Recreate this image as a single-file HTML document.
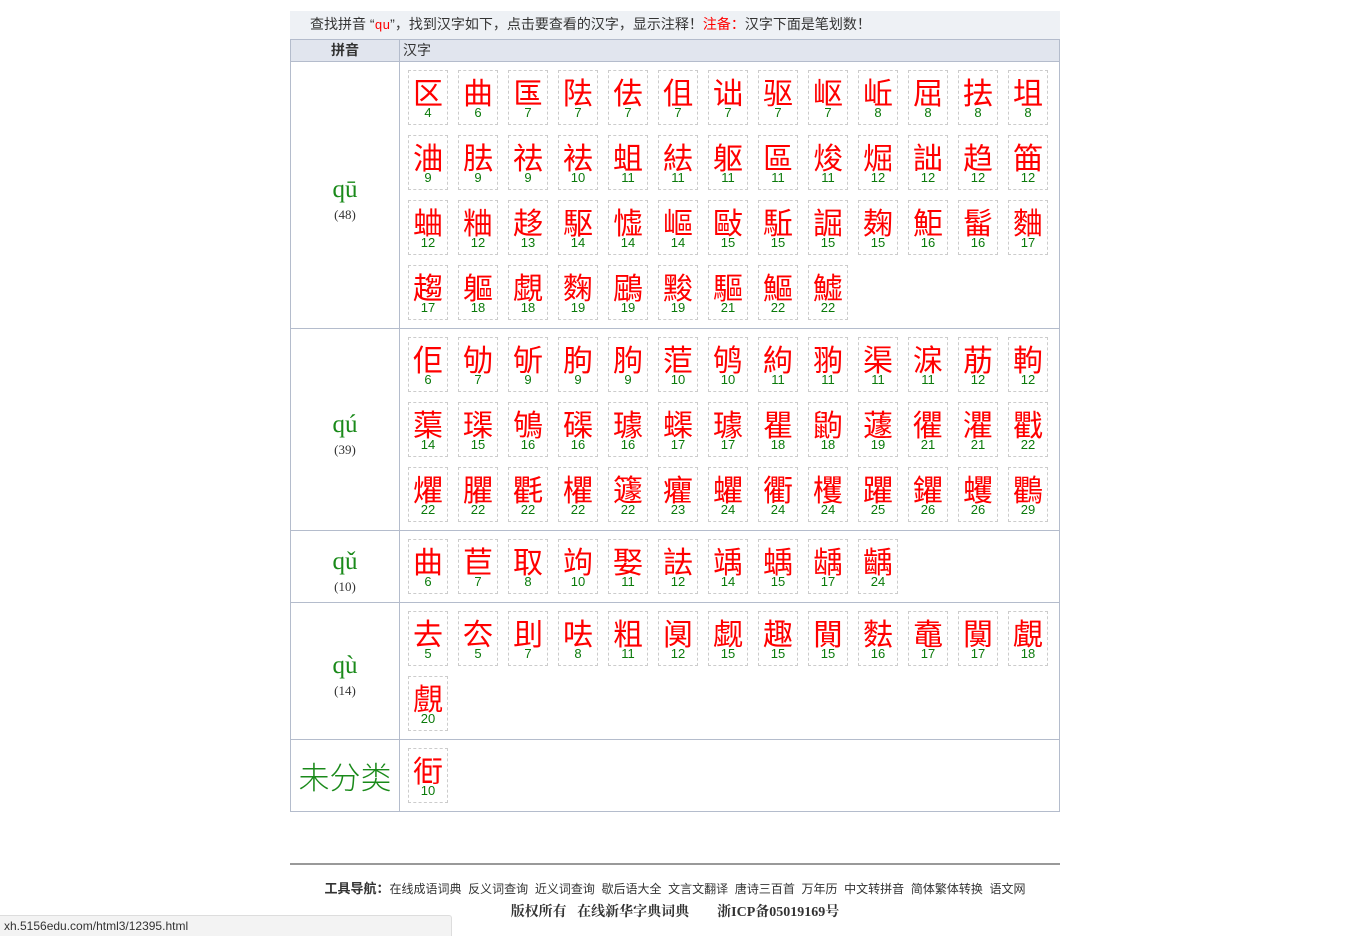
<!DOCTYPE html>
<html><head><meta charset="utf-8"><style>
body{margin:0;background:#fff;width:1348px;height:936px;position:relative;overflow:hidden;font-family:"Liberation Sans","Noto Sans CJK SC",sans-serif;}
#wrap{position:absolute;left:290px;top:11px;width:770px;}
.title{height:28px;background:#eef1f5;font-size:14px;line-height:26px;color:#333;padding-left:20px;}
.title .r{color:#f00}
.title .q{color:#f00;font-family:"Liberation Mono",monospace;font-size:13px}
table{border-collapse:collapse;width:770px;}
td,th{border:1px solid #b4bccc;padding:0;vertical-align:top;}
th{background:#e1e5ee;height:21px;font-size:14px;font-weight:bold;color:#333;text-align:center;line-height:20px}
th.h2{text-align:left;padding-left:3px;font-weight:normal}
td.py{width:108px;text-align:center;vertical-align:middle;color:#1a8a1a;font-family:"Liberation Serif","Noto Serif CJK SC",serif;font-size:25px;line-height:26px}
td.py .pw{position:relative;top:5px}
td.py span{display:block;font-size:13px;color:#333;line-height:16px;margin-top:4px;font-family:"Liberation Serif",serif}
.cells{padding:3px 0 3px 3px;display:flex;flex-wrap:wrap;}
.c{width:38px;height:53px;border:1px dashed #ccc;margin:5px 5px 5px 5px;text-align:center;}
.c b{display:block;font-weight:normal;color:#f00;font-size:30px;line-height:30px;margin-top:5px;font-family:"Noto Sans CJK SC",sans-serif;}
.c i{display:block;font-style:normal;color:#0a7a0a;font-size:13px;line-height:14px;margin-top:0px;font-family:"Liberation Sans",sans-serif}
.foot{position:absolute;left:290px;top:863px;width:770px;border-top:2px solid #999;text-align:center;color:#333;}
.nav{font-size:12px;margin-top:13px;}
.nav b{font-size:13px}
.copy{font-size:14px;font-weight:bold;margin-top:4px;font-family:"Liberation Serif","Noto Serif CJK SC",serif}
.status{position:absolute;left:0;top:915px;width:452px;height:21px;background:#f3f3f3;border:1px solid #ddd;border-left:none;border-bottom:none;border-top-right-radius:3px;font-size:12px;color:#333;line-height:21px;padding-left:4px;box-sizing:border-box}
</style></head><body>
<div id="wrap">
<div class="title">查找拼音 “<span class="q">qu</span>”，找到汉字如下，点击要查看的汉字，显示注释！<span class="r">注备：</span>汉字下面是笔划数！</div>
<table>
<tr><th>拼音</th><th class="h2">汉字</th></tr>
<tr><td class="py" style="height:266px"><div class="pw">qū<span>(48)</span></div></td><td><div class="cells">
<div class="c"><b>区</b><i>4</i></div><div class="c"><b>曲</b><i>6</i></div><div class="c"><b>匤</b><i>7</i></div><div class="c"><b>阹</b><i>7</i></div><div class="c"><b>佉</b><i>7</i></div><div class="c"><b>伹</b><i>7</i></div><div class="c"><b>诎</b><i>7</i></div><div class="c"><b>驱</b><i>7</i></div><div class="c"><b>岖</b><i>7</i></div><div class="c"><b>岴</b><i>8</i></div><div class="c"><b>屈</b><i>8</i></div><div class="c"><b>抾</b><i>8</i></div><div class="c"><b>坥</b><i>8</i></div>
<div class="c"><b>浀</b><i>9</i></div><div class="c"><b>胠</b><i>9</i></div><div class="c"><b>祛</b><i>9</i></div><div class="c"><b>袪</b><i>10</i></div><div class="c"><b>蛆</b><i>11</i></div><div class="c"><b>紶</b><i>11</i></div><div class="c"><b>躯</b><i>11</i></div><div class="c"><b>區</b><i>11</i></div><div class="c"><b>焌</b><i>11</i></div><div class="c"><b>煀</b><i>12</i></div><div class="c"><b>詘</b><i>12</i></div><div class="c"><b>趋</b><i>12</i></div><div class="c"><b>筁</b><i>12</i></div>
<div class="c"><b>蛐</b><i>12</i></div><div class="c"><b>粬</b><i>12</i></div><div class="c"><b>趍</b><i>13</i></div><div class="c"><b>駆</b><i>14</i></div><div class="c"><b>憈</b><i>14</i></div><div class="c"><b>嶇</b><i>14</i></div><div class="c"><b>敺</b><i>15</i></div><div class="c"><b>駈</b><i>15</i></div><div class="c"><b>誳</b><i>15</i></div><div class="c"><b>麹</b><i>15</i></div><div class="c"><b>鮔</b><i>16</i></div><div class="c"><b>髷</b><i>16</i></div><div class="c"><b>麯</b><i>17</i></div>
<div class="c"><b>趨</b><i>17</i></div><div class="c"><b>軀</b><i>18</i></div><div class="c"><b>覷</b><i>18</i></div><div class="c"><b>麴</b><i>19</i></div><div class="c"><b>鶌</b><i>19</i></div><div class="c"><b>黢</b><i>19</i></div><div class="c"><b>驅</b><i>21</i></div><div class="c"><b>鰸</b><i>22</i></div><div class="c"><b>鱋</b><i>22</i></div>
</div></td></tr>
<tr><td class="py" style="height:201px"><div class="pw">qú<span>(39)</span></div></td><td><div class="cells">
<div class="c"><b>佢</b><i>6</i></div><div class="c"><b>劬</b><i>7</i></div><div class="c"><b>斪</b><i>9</i></div><div class="c"><b>朐</b><i>9</i></div><div class="c"><b>胊</b><i>9</i></div><div class="c"><b>菃</b><i>10</i></div><div class="c"><b>鸲</b><i>10</i></div><div class="c"><b>絇</b><i>11</i></div><div class="c"><b>翑</b><i>11</i></div><div class="c"><b>渠</b><i>11</i></div><div class="c"><b>淭</b><i>11</i></div><div class="c"><b>荕</b><i>12</i></div><div class="c"><b>軥</b><i>12</i></div>
<div class="c"><b>蕖</b><i>14</i></div><div class="c"><b>璖</b><i>15</i></div><div class="c"><b>鴝</b><i>16</i></div><div class="c"><b>磲</b><i>16</i></div><div class="c"><b>璩</b><i>16</i></div><div class="c"><b>蟝</b><i>17</i></div><div class="c"><b>璩</b><i>17</i></div><div class="c"><b>瞿</b><i>18</i></div><div class="c"><b>鼩</b><i>18</i></div><div class="c"><b>蘧</b><i>19</i></div><div class="c"><b>忂</b><i>21</i></div><div class="c"><b>灈</b><i>21</i></div><div class="c"><b>戵</b><i>22</i></div>
<div class="c"><b>爠</b><i>22</i></div><div class="c"><b>臞</b><i>22</i></div><div class="c"><b>氍</b><i>22</i></div><div class="c"><b>欋</b><i>22</i></div><div class="c"><b>籧</b><i>22</i></div><div class="c"><b>癯</b><i>23</i></div><div class="c"><b>蠷</b><i>24</i></div><div class="c"><b>衢</b><i>24</i></div><div class="c"><b>欔</b><i>24</i></div><div class="c"><b>躣</b><i>25</i></div><div class="c"><b>鑺</b><i>26</i></div><div class="c"><b>蠼</b><i>26</i></div><div class="c"><b>鸜</b><i>29</i></div>
</div></td></tr>
<tr><td class="py" style="height:71px"><div class="pw">qǔ<span>(10)</span></div></td><td><div class="cells">
<div class="c"><b>曲</b><i>6</i></div><div class="c"><b>苣</b><i>7</i></div><div class="c"><b>取</b><i>8</i></div><div class="c"><b>竘</b><i>10</i></div><div class="c"><b>娶</b><i>11</i></div><div class="c"><b>詓</b><i>12</i></div><div class="c"><b>竬</b><i>14</i></div><div class="c"><b>蝺</b><i>15</i></div><div class="c"><b>龋</b><i>17</i></div><div class="c"><b>齲</b><i>24</i></div>
</div></td></tr>
<tr><td class="py" style="height:136px"><div class="pw">qù<span>(14)</span></div></td><td><div class="cells">
<div class="c"><b>去</b><i>5</i></div><div class="c"><b>厺</b><i>5</i></div><div class="c"><b>刞</b><i>7</i></div><div class="c"><b>呿</b><i>8</i></div><div class="c"><b>粗</b><i>11</i></div><div class="c"><b>阒</b><i>12</i></div><div class="c"><b>觑</b><i>15</i></div><div class="c"><b>趣</b><i>15</i></div><div class="c"><b>閴</b><i>15</i></div><div class="c"><b>麮</b><i>16</i></div><div class="c"><b>鼁</b><i>17</i></div><div class="c"><b>闃</b><i>17</i></div><div class="c"><b>覰</b><i>18</i></div>
<div class="c"><b>覻</b><i>20</i></div>
</div></td></tr>
<tr><td class="py" style="height:71px;font-size:31px;font-family:'Noto Sans CJK SC',sans-serif;font-weight:300">未分类</td><td><div class="cells">
<div class="c"><b>衐</b><i>10</i></div>
</div></td></tr>
</table>
</div>
<div class="foot">
<div class="nav"><b>工具导航：</b>在线成语词典&nbsp; 反义词查询&nbsp; 近义词查询&nbsp; 歇后语大全&nbsp; 文言文翻译&nbsp; 唐诗三百首&nbsp; 万年历&nbsp; 中文转拼音&nbsp; 简体繁体转换&nbsp; 语文网</div>
<div class="copy">版权所有&nbsp;&nbsp; 在线新华字典词典&nbsp;&nbsp;&nbsp;&nbsp;&nbsp;&nbsp;&nbsp; 浙ICP备05019169号</div>
</div>
<div class="status">xh.5156edu.com/html3/12395.html</div>
</body></html>
